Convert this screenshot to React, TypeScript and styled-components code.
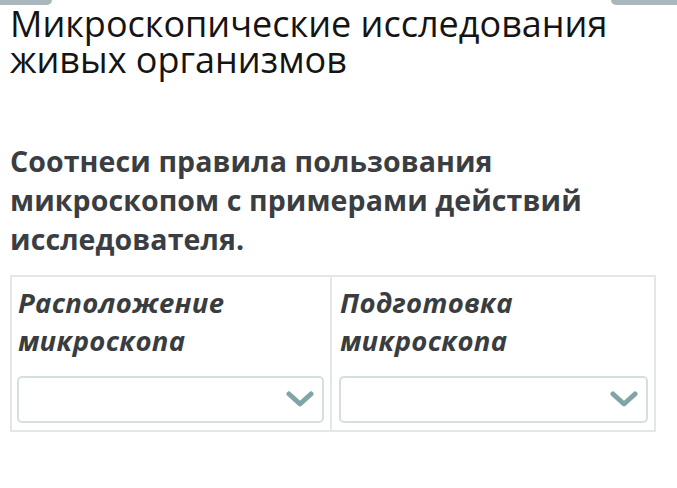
import React from "react";
import styled, { createGlobalStyle } from "styled-components";

const Global = createGlobalStyle`
  html, body { margin: 0; padding: 0; background: #fff; }
  body { font-family: "Open Sans", "Noto Sans", sans-serif; overflow: hidden; }
`;

const Page = styled.div`
  position: relative;
  width: 677px;
  height: 488px;
  background: #fff;
  padding: 0 10px;
  box-sizing: border-box;
`;

const Tab = styled.div<{ $side: "left" | "right" }>`
  position: absolute;
  top: 0;
  height: 5px;
  background: #a9b6bb;
  ${(p) =>
    p.$side === "left"
      ? "left: 0; width: 52px; border-bottom-right-radius: 6px;"
      : "right: 0; width: 66px; border-bottom-left-radius: 6px;"}
`;

const Title = styled.h1`
  margin: 0;
  padding-top: 6px;
  font-weight: 400;
  font-size: 36px;
  line-height: 36px;
  color: #141414;
  letter-spacing: 0px;
`;

const Prompt = styled.h2`
  margin: 64px 0 0;
  font-weight: 700;
  font-size: 28.5px;
  line-height: 39px;
  color: #3a3e42;
  letter-spacing: 0.1px;
`;

const Grid = styled.div`
  margin-top: 16px;
  width: 646px;
  display: grid;
  grid-template-columns: 318px 1fr;
  border: 2px solid #e3e7e8;
  box-sizing: border-box;
`;

const Cell = styled.div<{ $last?: boolean }>`
  padding: 7px ${(p) => (p.$last ? "6px" : "6px")} 7px ${(p) => (p.$last ? "7px" : "5px")};
  border-left: ${(p) => (p.$last ? "2px solid #e3e7e8" : "none")};
  display: flex;
  flex-direction: column;
`;

const Label = styled.div`
  font-style: italic;
  font-weight: 700;
  font-size: 27.5px;
  line-height: 38px;
  color: #393d40;
  padding-left: 1px;
  height: 92px;
  letter-spacing: 0.3px;
`;

const Select = styled.div`
  height: 47px;
  border: 2px solid #d6dfe0;
  border-radius: 5px;
  box-sizing: border-box;
  display: flex;
  align-items: center;
  justify-content: flex-end;
  padding-right: 8px;
`;

const Chevron = () => (
  <svg width="28" height="17" viewBox="0 0 28 17">
    <path d="M3 3 L14 13 L25 3" fill="none" stroke="#7fa5a8" strokeWidth="5" strokeLinecap="round" strokeLinejoin="round" />
  </svg>
);

export default function App() {
  return (
    <Page>
      <Global />
      <Tab $side="left" />
      <Tab $side="right" />
      <Title>
        Микроскопические исследования
        <br />
        живых организмов
      </Title>
      <Prompt>
        Соотнеси правила пользования
        <br />
        микроскопом с примерами действий
        <br />
        исследователя.
      </Prompt>
      <Grid>
        <Cell>
          <Label>
            Расположение
            <br />
            микроскопа
          </Label>
          <Select>
            <Chevron />
          </Select>
        </Cell>
        <Cell $last>
          <Label>
            Подготовка
            <br />
            микроскопа
          </Label>
          <Select>
            <Chevron />
          </Select>
        </Cell>
      </Grid>
    </Page>
  );
}
